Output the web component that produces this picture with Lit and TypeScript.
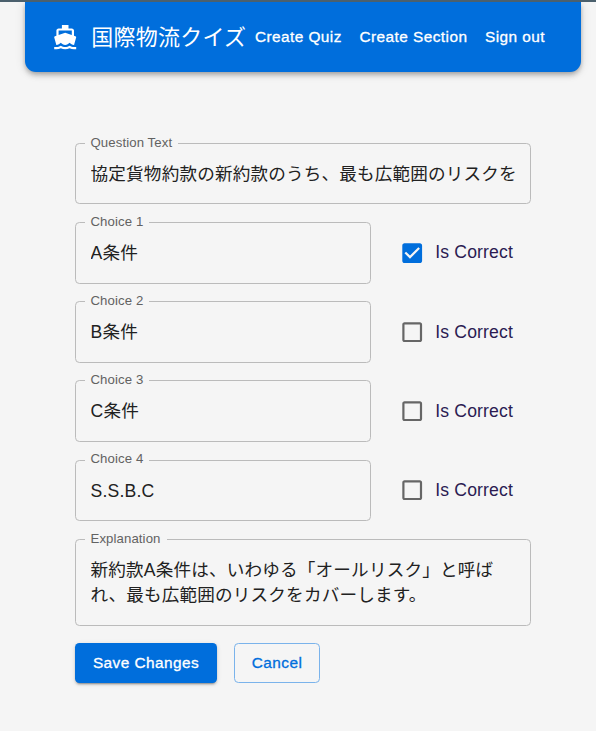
import { LitElement, html, css } from "lit";
import { customElement, property } from "lit/decorators.js";

@customElement("outlined-field")
class OutlinedField extends LitElement {
  @property() label = "";
  @property() value = "";
  @property({ type: Boolean, reflect: true }) multiline = false;

  static styles = css`
    :host {
      display: block;
      position: relative;
      box-sizing: border-box;
      height: 61.6px;
      border: 1px solid #bbb;
      border-radius: 4.4px;
      padding: 18px 14.6px 0;
    }
    :host([multiline]) {
      height: 87px;
    }
    .label {
      position: absolute;
      left: 9px;
      top: -10.2px;
      padding: 0 6px 0 5.5px;
      line-height: 18px;
      font-size: 13.2px;
      letter-spacing: 0.1px;
      color: #626262;
      background: #f5f5f5;
      white-space: nowrap;
    }
    .value {
      line-height: 25.3px;
      white-space: nowrap;
      overflow: hidden;
      color: #212121;
    }
    :host([multiline]) .value {
      white-space: pre-line;
    }
  `;

  render() {
    return html`<span class="label">${this.label}</span>
      <div class="value">${this.value}</div>`;
  }
}

@customElement("check-option")
class CheckOption extends LitElement {
  @property({ type: Boolean }) checked = false;

  static styles = css`
    :host {
      display: flex;
      align-items: center;
      gap: 9.8px;
      padding-top: 0.4px;
      color: #2b1b52;
    }
    svg {
      display: block;
      width: 26.4px;
      height: 26.4px;
      fill: #666;
    }
    .on {
      fill: #006edc;
    }
  `;

  render() {
    return html`
      ${this.checked
        ? html`<svg class="on" viewBox="0 0 24 24"><path d="M19 3H5c-1.11 0-2 .9-2 2v14c0 1.1.89 2 2 2h14c1.11 0 2-.9 2-2V5c0-1.1-.89-2-2-2zm-9 14l-5-5 1.41-1.41L10 14.17l7.59-7.59L19 8l-9 9z"/></svg>`
        : html`<svg viewBox="0 0 24 24"><path d="M19 5v14H5V5h14m0-2H5c-1.1 0-2 .9-2 2v14c0 1.1.9 2 2 2h14c1.1 0 2-.9 2-2V5c0-1.1-.9-2-2-2z"/></svg>`}
      <span>Is Correct</span>
    `;
  }
}

@customElement("app-root")
class AppRoot extends LitElement {
  choices = [
    { text: "A条件", correct: true },
    { text: "B条件", correct: false },
    { text: "C条件", correct: false },
    { text: "S.S.B.C", correct: false },
  ];

  static styles = css`
    :host {
      display: block;
      box-sizing: border-box;
      height: 731px;
      overflow: hidden;
      background: #f5f5f5;
      border-top: 2px solid #4b606d;
      font-family: "Liberation Sans", "Noto Sans CJK JP", sans-serif;
      font-size: 17.6px;
      letter-spacing: 0.165px;
    }
    .bar {
      box-sizing: border-box;
      height: 70px;
      margin: 0 15px 0 25px;
      padding: 0 36px 0 26.8px;
      display: flex;
      align-items: center;
      color: #fff;
      background: #006edc;
      border-radius: 0 0 11px 11px;
      box-shadow: 0 2px 4px -1px rgba(0, 0, 0, 0.2), 0 4px 5px rgba(0, 0, 0, 0.14),
        0 1px 11px rgba(0, 0, 0, 0.12);
    }
    .boat {
      width: 26.4px;
      height: 26.4px;
      fill: #fff;
      margin-right: 13px;
    }
    .title {
      font-size: 22px;
      line-height: 35px;
      letter-spacing: 0.25px;
      white-space: nowrap;
    }
    .nav {
      display: flex;
      gap: 17.6px;
      margin-left: auto;
    }
    .nav,
    .btn {
      font-size: 15.4px;
      letter-spacing: 0.44px;
      white-space: nowrap;
      -webkit-text-stroke: 0.3px currentColor;
    }
    .form {
      width: 456px;
      margin: 70.8px 0 0 75px;
      display: flex;
      flex-direction: column;
      gap: 17.6px;
    }
    .row {
      display: grid;
      grid-template-columns: 296px 1fr;
      column-gap: 28px;
    }
    .actions {
      display: flex;
      gap: 17px;
    }
    .btn {
      box-sizing: border-box;
      width: 142px;
      height: 40px;
      display: flex;
      align-items: center;
      justify-content: center;
      border-radius: 4.4px;
      color: #fff;
      background: #006edc;
      box-shadow: 0 3px 1px -2px rgba(0, 0, 0, 0.2), 0 2px 2px rgba(0, 0, 0, 0.14),
        0 1px 5px rgba(0, 0, 0, 0.12);
    }
    .cancel {
      width: 86px;
      color: #006edc;
      background: none;
      border: 1px solid #7ab3eb;
      box-shadow: none;
    }
  `;

  render() {
    return html`
      <header class="bar">
        <svg class="boat" viewBox="0 0 24 24"><path d="M20 21c-1.39 0-2.78-.47-4-1.32-2.44 1.71-5.56 1.71-8 0C6.78 20.53 5.39 21 4 21H2v2h2c1.38 0 2.74-.35 4-.99 2.52 1.29 5.48 1.29 8 0 1.26.65 2.62.99 4 .99h2v-2h-2zM3.95 19H4c1.6 0 3.02-.88 4-2 .98 1.12 2.4 2 4 2s3.02-.88 4-2c.98 1.12 2.4 2 4 2h.05l1.89-6.68c.08-.26.06-.54-.06-.78s-.34-.42-.6-.5L20 10.62V6c0-1.1-.9-2-2-2h-3V1H9v3H6c-1.1 0-2 .9-2 2v4.62l-1.29.42c-.26.08-.48.26-.6.5s-.15.52-.06.78L3.95 19zM6 6h12v3.97L12 8 6 9.97V6z"/></svg>
        <span class="title">国際物流クイズ</span>
        <nav class="nav"><span>Create Quiz</span><span>Create Section</span><span>Sign out</span></nav>
      </header>
      <main class="form">
        <outlined-field label="Question Text" value="協定貨物約款の新約款のうち、最も広範囲のリスクを"></outlined-field>
        ${this.choices.map(
          (c, i) => html`<div class="row">
            <outlined-field label="Choice ${i + 1}" .value=${c.text}></outlined-field>
            <check-option .checked=${c.correct}></check-option>
          </div>`
        )}
        <outlined-field multiline label="Explanation" .value=${"新約款A条件は、いわゆる「オールリスク」と呼ば\nれ、最も広範囲のリスクをカバーします。"}></outlined-field>
        <div class="actions">
          <div class="btn">Save Changes</div>
          <div class="btn cancel">Cancel</div>
        </div>
      </main>
    `;
  }
}
